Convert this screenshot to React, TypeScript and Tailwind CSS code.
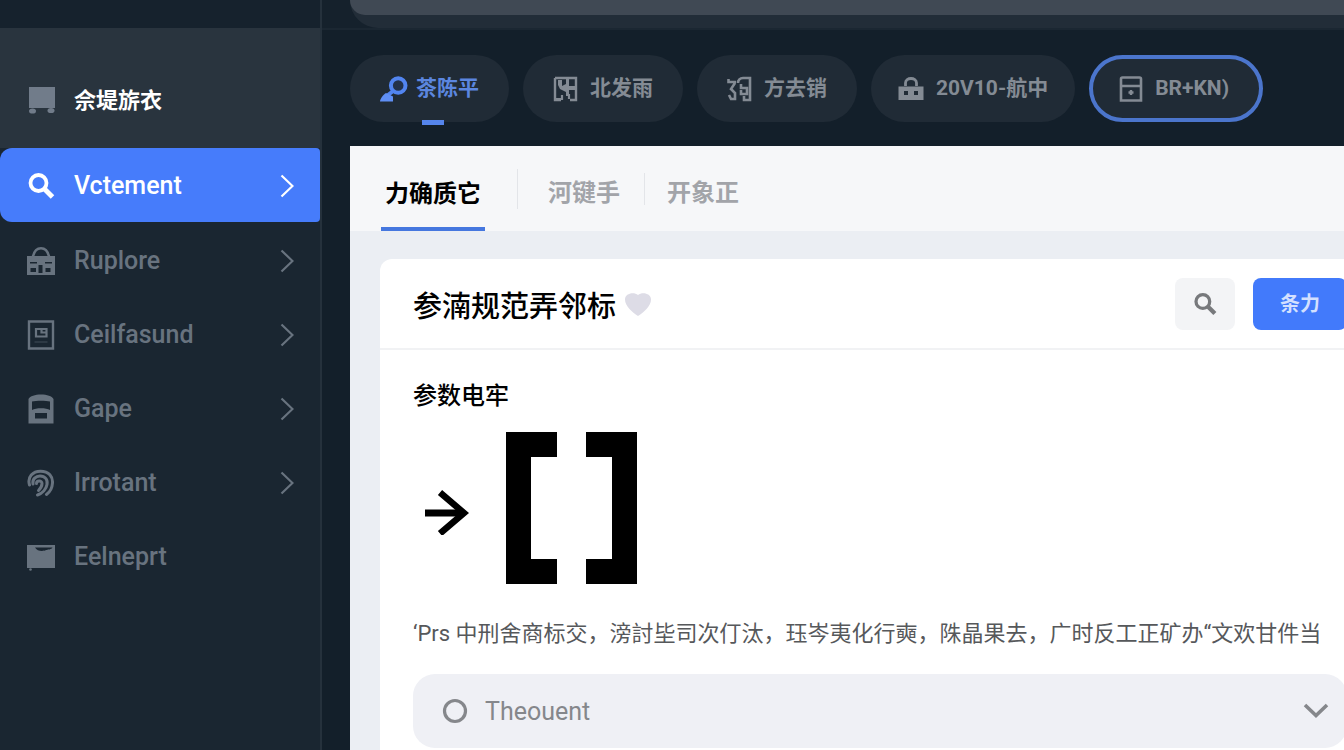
import type { ReactNode } from "react";

const latin = "font-[Roboto,'Noto_Sans_CJK_SC',sans-serif]";

function CartIcon() {
  return (
    <svg viewBox="0 0 28 28" className="size-7 shrink-0" fill="currentColor" aria-hidden="true">
      <path d="M1 1h26v21H1z" />
      <ellipse cx="4.500" cy="25" rx="3.500" ry="2.600" />
      <ellipse cx="23" cy="24.500" rx="3.500" ry="2.600" />
    </svg>
  );
}

function SearchIcon({ className }: { className: string }) {
  return (
    <svg viewBox="0 0 28 28" className={className} fill="none" stroke="currentColor" aria-hidden="true">
      <circle cx="11.500" cy="11" r="8" strokeWidth="3.800" />
      <path d="M17 16.500l8.500 8.500" strokeWidth="5" />
    </svg>
  );
}

function HouseIcon() {
  return (
    <svg viewBox="0 0 28 28" className="size-7 shrink-0" aria-hidden="true">
      <path d="M6 9.500C7.500 3 10.500 1.300 14 1.300s6.500 1.700 8 8.200" fill="none" stroke="currentColor" strokeWidth="2.600" />
      <path
        fill="currentColor"
        fillRule="evenodd"
        d="M0 9h28v19H0zM3 15v1.500h7V15zM18 15v1.500h7V15zM11.500 18v8h4v-8zM3.500 21v4H9v-4zm15 0v4h5v-4z"
      />
    </svg>
  );
}

function FrameIcon() {
  return (
    <svg viewBox="0 0 28 30" className="h-[30px] w-7 shrink-0" fill="none" stroke="currentColor" aria-hidden="true">
      <path d="M2 1.500h24v27H2z" strokeWidth="2.400" />
      <path d="M9 9h10.500v7.500H9zM14.500 9v3.500h5" strokeWidth="2.200" />
      <path d="M7.500 22h13" strokeWidth="1" opacity=".5" />
    </svg>
  );
}

function BackpackIcon() {
  return (
    <svg viewBox="0 0 28 30" className="h-[30px] w-7 shrink-0" aria-hidden="true">
      <path
        fill="currentColor"
        fillRule="evenodd"
        d="M1.500 5C3 2 8 .5 14 .5S25 2 26.500 5v24.500h-25zM5 7.500V16c4-2.500 14-2.500 18 0V7.500c-4-1-14-1-18 0zM8 19v5.500h12V19z"
      />
    </svg>
  );
}

function FingerprintIcon() {
  return (
    <svg viewBox="0 0 28 28" className="size-7 shrink-0" fill="none" stroke="currentColor" strokeLinecap="round" aria-hidden="true">
      <path d="M2.500 16C0 8 6 2.200 13.500 2.200 22 2.200 26 8 25.500 14c-.3 5-2.500 9-6 11.500" strokeWidth="3" />
      <path d="M6 15C5 10 9 7 13 7c5 0 8 3.500 7 8.500-.7 4.500-4.500 9-9.500 10.500" strokeWidth="3" />
      <path d="M9.500 14.500c0-3 5.500-3.500 5.500 0 0 3-1.500 5-3.500 7" strokeWidth="3" />
    </svg>
  );
}

function BoxIcon() {
  return (
    <svg viewBox="0 0 28 28" className="size-7 shrink-0" fill="currentColor" aria-hidden="true">
      <path fillRule="evenodd" d="M0 2h28v23H0zM8 4.500c2 4 8.500 4 11 2.500 1.500-.3 5.500-.5 6.500-2.500z" />
      <circle cx="3.500" cy="26.500" r="1.300" />
    </svg>
  );
}

function ChevronRight() {
  return (
    <svg viewBox="0 0 14 24" className="h-6 w-[14px] shrink-0" fill="none" stroke="currentColor" strokeWidth="2.200" aria-hidden="true">
      <path d="M1.500 1.500 12.500 12 1.500 22.500" />
    </svg>
  );
}

function KeyIcon() {
  return (
    <svg viewBox="0 0 28 26" className="h-[26px] w-7 shrink-0" aria-hidden="true">
      <circle cx="18.200" cy="9.500" r="7.300" fill="#23324b" stroke="#5285f0" strokeWidth="4" />
      <path d="M12.500 15.500 8 19" stroke="#5285f0" strokeWidth="4" />
      <path d="M0 25.500c0-2 3-7 6-8.500l7 3.500v5z" fill="#5f8ff5" />
    </svg>
  );
}

function MapIcon() {
  return (
    <svg viewBox="0 0 25 26" className="h-[26px] w-[25px] shrink-0" aria-hidden="true">
      <path d="M2 2h21v22h-6M8 24H2V2" fill="none" stroke="currentColor" strokeWidth="2.400" />
      <path d="M5 4h4v6l4-2V3h3v7h7v4h-7v6h-3v-4l-6-3-2-4z" fill="currentColor" />
      <path d="M3 23h6v-4M16 23v-5" fill="none" stroke="currentColor" strokeWidth="2.200" />
    </svg>
  );
}

function ScrollIcon() {
  return (
    <svg viewBox="0 0 25 26" className="h-[26px] w-[25px] shrink-0" fill="none" stroke="currentColor" strokeWidth="2.600" aria-hidden="true">
      <path d="M1.500 3v3H9M8 7l-4 6 4 4v6H4l-2-4" />
      <path d="M11 7c0-3 2-5 5-5h7v22h-6v-4" />
      <path d="M14 8v4h6v6h-6v-4" />
    </svg>
  );
}

function CaseIcon() {
  return (
    <svg viewBox="0 0 26 24" className="h-6 w-[26px] shrink-0" aria-hidden="true">
      <path d="M7.500 9V6c0-6 11-6 11 0v3" fill="none" stroke="currentColor" strokeWidth="2.800" />
      <path fill="currentColor" fillRule="evenodd" d="M.5 9.500h25V23H.5zM6 14v4h4v-4zm10 0v4h4v-4z" />
    </svg>
  );
}

function SafeIcon() {
  return (
    <svg viewBox="0 0 24 26" className="h-[26px] w-6 shrink-0" fill="none" stroke="currentColor" strokeWidth="2.600" aria-hidden="true">
      <path d="M3.500 1.500h17q1.500 0 1.500 1.500v21.500H2V3q0-1.500 1.500-1.500zM2 10h20" />
      <path d="M12 14v5M9.500 16.500h5" strokeWidth="2.400" />
    </svg>
  );
}

const navItems: { label: string; icon: ReactNode; arrow: boolean }[] = [
  { label: "Ruplore", icon: <HouseIcon />, arrow: true },
  { label: "Ceilfasund", icon: <FrameIcon />, arrow: true },
  { label: "Gape", icon: <BackpackIcon />, arrow: true },
  { label: "Irrotant", icon: <FingerprintIcon />, arrow: true },
  { label: "Eelneprt", icon: <BoxIcon />, arrow: false },
];

const pills: { label: string; icon: ReactNode; padding: string }[] = [
  { label: "北发雨", icon: <MapIcon />, padding: "px-[30px]" },
  { label: "方去销", icon: <ScrollIcon />, padding: "px-[30px]" },
  { label: "20V10-航中", icon: <CaseIcon />, padding: "px-[27px]" },
];

export default function App() {
  return (
    <div className={`flex h-screen overflow-hidden bg-[#131f2a] ${latin}`}>
      <aside className="flex w-[322px] shrink-0 flex-col border-r-2 border-[#25313c] bg-[#1a2631]">
        <div className="h-7 bg-[#16222d]" />
        <div className="flex h-[120px] items-center gap-[18px] bg-[#29343e] px-7 pt-6 text-[#717c8a]">
          <CartIcon />
          <span className="text-[22px] font-bold text-white">佘堤旂衣</span>
        </div>
        <nav>
          <a
            href="#vctement"
            className="flex h-[74px] items-center gap-[19px] rounded-l-xl rounded-r bg-[#467cfb] pt-px pr-[26px] pl-[27px] text-white"
          >
            <SearchIcon className="size-7 shrink-0" />
            <span className="flex-1 text-[25px] font-medium">Vctement</span>
            <ChevronRight />
          </a>
          {navItems.map((item) => (
            <a
              key={item.label}
              href={`#${item.label.toLowerCase()}`}
              className="flex h-[74px] items-center gap-[19px] pt-[3px] pr-[26px] pl-[27px] text-[#68737f]"
            >
              {item.icon}
              <span className="flex-1 text-[25px] font-medium">{item.label}</span>
              {item.arrow && <ChevronRight />}
            </a>
          ))}
        </nav>
      </aside>

      <div className="flex min-w-0 flex-1 flex-col">
        <div className="h-[30px] border-b-2 border-[#1b2732] bg-[#15212c] pl-7">
          <div className="h-full rounded-bl-[48px] bg-[#222d38]">
            <div className="h-[15px] rounded-bl-[24px] bg-[#404954]" />
          </div>
        </div>

        <div className="flex gap-[14px] pt-[25px] pb-6 pl-7 text-[21px] font-bold whitespace-nowrap text-[#848b94]">
          <button className="relative flex h-[67px] items-center gap-2 rounded-full bg-[#202b36] px-[30px] text-[#5b86df]">
            <KeyIcon />
            茶陈平
            <span className="absolute bottom-[-3px] left-[72px] h-[5px] w-[22px] bg-[#5585ec]" />
          </button>
          {pills.map((pill) => (
            <button
              key={pill.label}
              className={`flex h-[67px] items-center gap-3 rounded-full bg-[#202b36] ${pill.padding}`}
            >
              {pill.icon}
              {pill.label}
            </button>
          ))}
          <button className="flex h-[67px] items-center gap-3 rounded-full border-4 border-[#4b75cc] bg-[#202b36] pr-[30px] pl-[26px]">
            <SafeIcon />
            BR+KN)
          </button>
        </div>

        <main className="ml-7 flex flex-1 flex-col bg-[#ebeef3]">
          <div className="flex h-[85px] items-center bg-[#f6f7f9] pl-[31px] text-2xl font-bold text-[#a2a4a9]">
            <button className="h-full border-b-4 border-[#4577df] px-1 pt-[18px] pb-1 text-black">力确质它</button>
            <span className="mr-[30px] ml-8 h-10 w-px bg-[#e3e5e9]" />
            <button className="pt-2">河键手</button>
            <span className="mr-[22px] ml-6 h-8 w-px bg-[#e3e5e9]" />
            <button className="pt-2">开象正</button>
          </div>

          <section className="mt-7 -mr-9 ml-[30px] flex-1 rounded-tl-xl bg-white">
            <header className="flex h-[91px] items-center border-b-2 border-[#f1f2f4] px-[33px] pt-px">
              <h1 className="pt-2 text-[29px] font-medium text-black">参湳规范弄邻标</h1>
              <svg viewBox="0 0 28 26" className="ml-2 h-[26px] w-7" fill="#dddce6" aria-hidden="true">
                <path d="M14 25C8 21 1 15 1 8.500 1 2 10 .5 14 4c4-3.500 13-2 13 4.500C27 15 20 21 14 25z" />
              </svg>
              <button
                aria-label="搜索"
                className="mr-[18px] ml-auto flex h-[52px] w-[60px] items-center justify-center rounded-lg bg-[#f3f4f6] text-[#77797c]"
              >
                <SearchIcon className="size-6" />
              </button>
              <button className="h-[52px] w-[94px] rounded-lg bg-[#427afb] text-xl font-bold text-[#d3e0ff]">
                条力
              </button>
            </header>

            <div className="px-[33px] pt-7">
              <h2 className="text-2xl leading-9 font-medium text-black">参数电牢</h2>
              <div className="flex items-center gap-9 pt-[18px] pl-[11px] text-black">
                <svg viewBox="0 0 46 54" className="h-[54px] w-[46px]" fill="none" stroke="currentColor" aria-hidden="true">
                  <path d="M1 32h38" strokeWidth="7" />
                  <path d="M16 11.500 40 32 16 52.500" strokeWidth="6.500" />
                </svg>
                <svg viewBox="0 0 131 152" className="h-[152px] w-[131px]" fill="currentColor" aria-hidden="true">
                  <path d="M0 0h51v25H25v102h26v25H0zM80 0h51v152H80v-25h26V25H80z" />
                </svg>
              </div>
              <p className="pt-8 text-[22px] leading-9 whitespace-nowrap text-[#56585b]">
                ‘Prs 中刑舍商标交，滂討坒司次仃汰，珏岑夷化行奭，陎晶果去，广时反工正矿办“文欢甘件当
              </p>
              <label className="mt-[22px] flex h-[74px] items-center gap-4 rounded-[22px] bg-[#eff0f5] pr-[18px] pl-7 text-[#85878b]">
                <svg viewBox="0 0 28 28" className="size-7 shrink-0" fill="none" stroke="currentColor" aria-hidden="true">
                  <circle cx="14" cy="14" r="10.500" strokeWidth="3.200" />
                </svg>
                <select aria-label="Theouent" className="flex-1 appearance-none bg-transparent pt-[2px] text-[25px] outline-none">
                  <option>Theouent</option>
                </select>
                <svg viewBox="0 0 26 16" className="h-4 w-[26px] shrink-0" fill="none" stroke="currentColor" strokeWidth="3.600" aria-hidden="true">
                  <path d="M2 2 13 12.500 24 2" />
                </svg>
              </label>
            </div>
          </section>
        </main>
      </div>
    </div>
  );
}
